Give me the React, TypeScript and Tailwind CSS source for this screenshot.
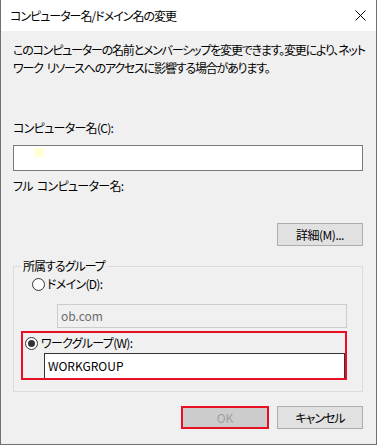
import React from "react";

const font = "font-['Noto_Sans_CJK_JP','Noto_Sans',sans-serif] [font-feature-settings:'palt']";

function Radio({ checked }: { checked?: boolean }) {
  return (
    <span className="relative inline-flex h-[13px] w-[13px] shrink-0 items-center justify-center rounded-full border border-[#333333] bg-white">
      {checked && <span className="h-[7px] w-[7px] rounded-full bg-[#333333]" />}
    </span>
  );
}

const Gap = () => <span className="inline-block w-[4px]" />;

export default function App() {
  return (
    <div className={`h-[446px] w-[377px] bg-white text-[12px] leading-[18px] tracking-[-1px] text-black ${font}`}>
      <div className="flex h-[445px] flex-col border-x border-b border-[#707070] bg-[#f0f0f0]">
        {/* title bar */}
        <div className="flex h-[31px] items-center justify-between bg-white pl-[9px] pr-[10px]">
          <span className="whitespace-nowrap">コンピューター名/ドメイン名の変更</span>
          <svg width="11" height="11" viewBox="0 0 11 11">
            <path d="M0.5 0.5 L10.5 10.5 M10.5 0.5 L0.5 10.5" stroke="#000" strokeWidth="1" />
          </svg>
        </div>

        <div className="pl-[12px] pr-[13px]">
          <p className="mt-[10px] whitespace-nowrap tracking-[-1.2px]">
            このコンピューターの名前とメンバーシップを変更できます。変更により、ネット
            <br />
            ワーク<Gap />リソースへのアクセスに影響する場合があります。
          </p>

          <div className="mt-[42px] tracking-[-0.7px]">コンピューター名(C):</div>
          <div className="relative mt-[8px] h-[26px] border border-[#7a7a7a] bg-white">
            <span className="absolute left-[20px] top-[2px] h-[9px] w-[10px] bg-[#ffffd8]" />
          </div>

          <div className="mt-[6px] tracking-[-0.7px]">
            フル<Gap />コンピューター名:
          </div>

          <div className="mt-[28px] flex justify-end">
            <button className="h-[23px] w-[86px] border border-[#adadad] bg-[#e1e1e1] text-[12px] leading-none tracking-[-0.5px]">
              詳細(M)...
            </button>
          </div>

          <fieldset className="mt-[11px] border border-[#dcdcdc] pb-[11px] pl-[7px] pr-[15px]">
            <legend className="px-[2px]">所属するグループ</legend>
            <label className="ml-[11px] flex items-center gap-[2px] tracking-[-0.7px]">
              <Radio />
              <span>ドメイン(D):</span>
            </label>
            <div className="ml-[36px] mt-[11px] flex h-[24px] items-center border border-[#cccccc] bg-[#f0f0f0] pl-[3px] tracking-normal text-[#6d6d6d]">
              ob.com
            </div>
            <div className="mt-[3px] border-2 border-[#e81123] pl-[2px] pt-[1px]">
              <label className="flex items-center gap-[3px] tracking-[-0.7px]">
                <Radio checked />
                <span>ワークグループ(W):</span>
              </label>
              <div className="ml-[19px] mt-[1px] flex h-[25px] items-center border-x border-t border-[#333333] bg-white pl-[3px] tracking-normal">
                WORKGROUP
              </div>
            </div>
          </fieldset>

          <div className="mt-[14px] flex justify-end gap-[8px]">
            <button className="h-[23px] w-[88px] border-2 border-[#e81123] bg-[#cccccc] text-[12px] leading-none tracking-normal text-[#a0a0a0]">
              OK
            </button>
            <button className="h-[23px] w-[86px] border border-[#adadad] bg-[#e1e1e1] text-[12px] leading-none">
              キャンセル
            </button>
          </div>
        </div>
      </div>
    </div>
  );
}
